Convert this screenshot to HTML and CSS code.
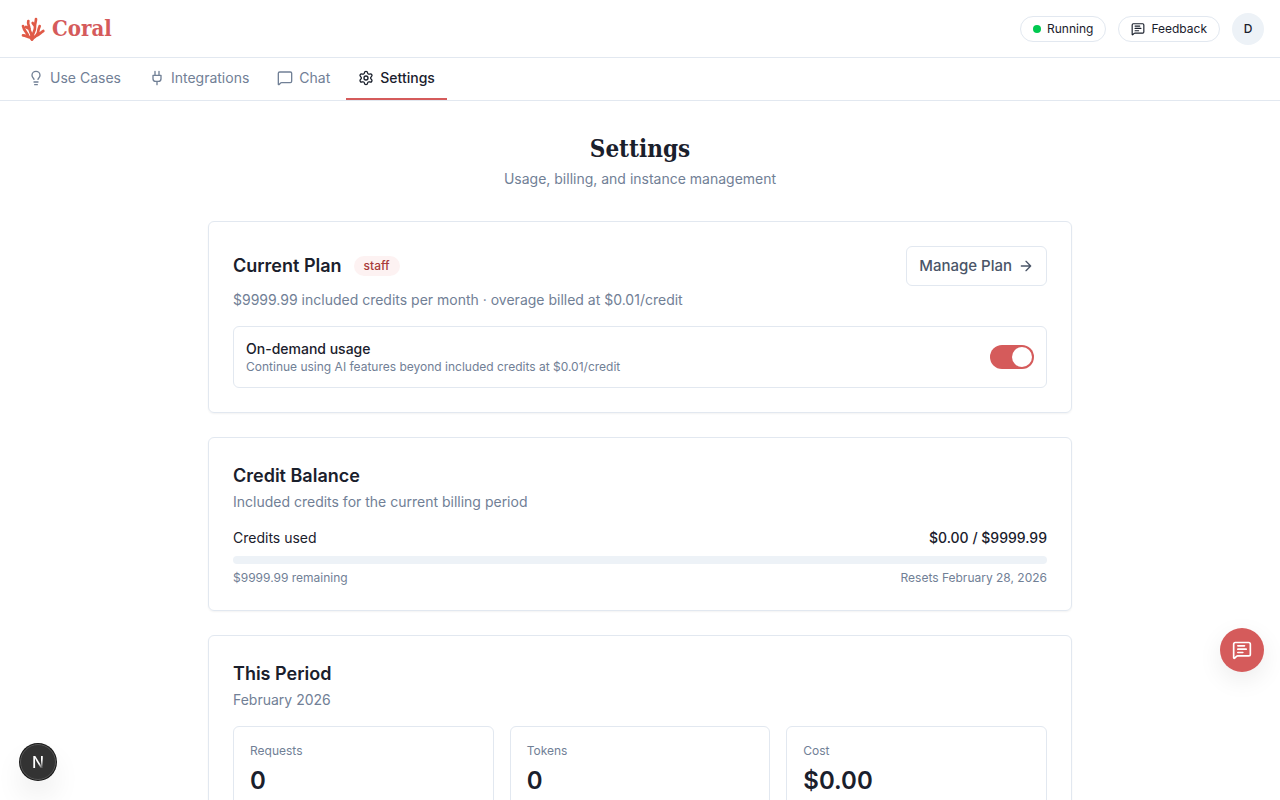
FILE: index.html
```html
<!DOCTYPE html>
<html lang="en">
<head>
    <meta charset="UTF-8">
    <meta name="viewport" content="width=device-width, initial-scale=1.0">
    <title>Coral - Settings</title>
    <link rel="stylesheet" href="styles.css">
</head>
<body>
    <header class="header">
        <a href="#" class="brand">
            <svg class="brand-icon" viewBox="0 0 96 96" aria-hidden="true">
                <path d="M47 72C38 75 32 68 21 67M37 71C35 58 24 56 21 39M47 72C48 60 40 56 40 46C40 38 34 34 37 24M41 48L30 42M49 72C50 60 58 54 57 42C56 32 60 28 60 18M57 40L50 30M50 75C62 70 66 62 67 54C67 48 70 44 71 39M62 68C70 66 74 58 82 54" />
                <path class="brand-base" d="M42 72L48 80L54 72Z" />
            </svg>
            <span class="brand-name">Coral</span>
        </a>
        <div class="header-actions">
            <button class="pill" type="button"><span class="dot"></span>Running</button>
            <button class="pill" type="button">
                <svg class="icon icon-sm" viewBox="0 0 24 24" aria-hidden="true">
                    <path d="M22 17a2 2 0 0 1-2 2H6.828a2 2 0 0 0-1.414.586l-2.202 2.202A.71.71 0 0 1 2 21.286V5a2 2 0 0 1 2-2h16a2 2 0 0 1 2 2z" />
                    <path d="M7 7h8M7 11h10M7 15h6" />
                </svg>
                Feedback
            </button>
            <button class="avatar" type="button">D</button>
        </div>
    </header>

    <nav class="tabs">
        <a href="#" class="tab">
            <svg class="icon" viewBox="0 0 24 24" aria-hidden="true">
                <path d="M15 14c.2-1 .7-1.700 1.500-2.500 1-.9 1.500-2.200 1.500-3.500A6 6 0 0 0 6 8c0 1 .2 2.200 1.500 3.500.7.700 1.300 1.500 1.500 2.500" />
                <path d="M9 18h6M10 22h4" />
            </svg>
            Use Cases
        </a>
        <a href="#" class="tab">
            <svg class="icon" viewBox="0 0 24 24" aria-hidden="true">
                <path d="M12 22v-5M9 8V2M15 8V2M18 8v5a4 4 0 0 1-4 4h-4a4 4 0 0 1-4-4V8Z" />
            </svg>
            Integrations
        </a>
        <a href="#" class="tab">
            <svg class="icon" viewBox="0 0 24 24" aria-hidden="true">
                <path d="M22 17a2 2 0 0 1-2 2H6.828a2 2 0 0 0-1.414.586l-2.202 2.202A.71.71 0 0 1 2 21.286V5a2 2 0 0 1 2-2h16a2 2 0 0 1 2 2z" />
            </svg>
            Chat
        </a>
        <a href="#" class="tab active" aria-current="page">
            <svg class="icon" viewBox="0 0 24 24" aria-hidden="true">
                <path d="M9.671 4.136a2.340 2.340 0 0 1 4.659 0 2.340 2.340 0 0 0 3.319 1.915 2.340 2.340 0 0 1 2.330 4.033 2.340 2.340 0 0 0 0 3.831 2.340 2.340 0 0 1-2.330 4.033 2.340 2.340 0 0 0-3.319 1.915 2.340 2.340 0 0 1-4.659 0 2.340 2.340 0 0 0-3.320-1.915 2.340 2.340 0 0 1-2.330-4.033 2.340 2.340 0 0 0 0-3.831A2.340 2.340 0 0 1 6.350 6.051a2.340 2.340 0 0 0 3.319-1.915" />
                <circle cx="12" cy="12" r="3" />
            </svg>
            Settings
        </a>
    </nav>

    <main class="page">
        <div class="page-title">
            <h1>Settings</h1>
            <p class="muted">Usage, billing, and instance management</p>
        </div>

        <section class="card">
            <div class="plan-header">
                <div class="plan-name">
                    <h2>Current Plan</h2>
                    <span class="badge">staff</span>
                </div>
                <button class="btn-outline" type="button">
                    Manage Plan
                    <svg class="icon" viewBox="0 0 24 24" aria-hidden="true">
                        <path d="M5 12h14M12 5l7 7-7 7" />
                    </svg>
                </button>
            </div>
            <p class="muted plan-info">$9999.99 included credits per month · overage billed at $0.01/credit</p>
            <div class="option">
                <div>
                    <label class="option-label" for="ondemand">On-demand usage</label>
                    <p class="small">Continue using AI features beyond included credits at $0.01/credit</p>
                </div>
                <input class="switch" type="checkbox" role="switch" id="ondemand" checked>
            </div>
        </section>

        <section class="card">
            <h2>Credit Balance</h2>
            <p class="muted subtitle">Included credits for the current billing period</p>
            <div class="row">
                <label for="credits">Credits used</label>
                <span class="amount">$0.00 / $9999.99</span>
            </div>
            <progress class="bar" id="credits" value="0" max="9999.99"></progress>
            <div class="row small">
                <span>$9999.99 remaining</span>
                <span>Resets February 28, 2026</span>
            </div>
        </section>

        <section class="card">
            <h2>This Period</h2>
            <p class="muted subtitle">February 2026</p>
            <div class="stats">
                <div class="stat">
                    <p class="small">Requests</p>
                    <p class="stat-value">0</p>
                </div>
                <div class="stat">
                    <p class="small">Tokens</p>
                    <p class="stat-value">0</p>
                </div>
                <div class="stat">
                    <p class="small">Cost</p>
                    <p class="stat-value">$0.00</p>
                </div>
            </div>
        </section>
    </main>

    <button class="fab" type="button" aria-label="Send feedback">
        <svg class="icon icon-lg" viewBox="0 0 24 24" aria-hidden="true">
            <path d="M22 17a2 2 0 0 1-2 2H6.828a2 2 0 0 0-1.414.586l-2.202 2.202A.71.71 0 0 1 2 21.286V5a2 2 0 0 1 2-2h16a2 2 0 0 1 2 2z" />
            <path d="M7 7h8M7 11h10M7 15h6" />
        </svg>
    </button>
    <button class="dev-badge" type="button" aria-label="Open dev tools"><span class="dev-letter">N</span></button>
</body>
</html>
```

FILE: styles.css
```css
* {
    box-sizing: border-box;
    margin: 0;
}

html {
    scrollbar-width: none;
}

body {
    font-family: 'Inter', sans-serif;
    font-size: 14px;
    line-height: 20px;
    color: #1a202c;
    background-color: #fff;
}

button {
    font-family: inherit;
    color: inherit;
    cursor: pointer;
}

a {
    text-decoration: none;
}

/* Icons */
.icon {
    width: 16px;
    height: 16px;
    flex-shrink: 0;
    fill: none;
    stroke: currentColor;
    stroke-width: 2;
    stroke-linecap: round;
    stroke-linejoin: round;
}

.icon-sm {
    width: 14px;
    height: 14px;
}

.icon-lg {
    width: 20px;
    height: 20px;
}

/* Header */
.header {
    display: flex;
    justify-content: space-between;
    align-items: center;
    padding: 12px 16px;
    border-bottom: 1px solid #e2e8f0;
}

.brand {
    display: flex;
    align-items: center;
    gap: 4px;
    color: #d55b5b;
}

.brand-icon {
    width: 32px;
    height: 32px;
    fill: none;
    stroke: #e05a47;
    stroke-width: 8;
    stroke-linecap: round;
    stroke-linejoin: round;
}

.brand-base {
    fill: #e05a47;
}

.brand-name {
    font-family: 'DejaVu Serif Condensed', 'DejaVu Serif', serif;
    font-size: 22px;
    font-weight: 700;
    line-height: 33px;
}

.header-actions {
    display: flex;
    align-items: center;
    gap: 12px;
}

.pill {
    display: flex;
    align-items: center;
    gap: 6px;
    padding: 4px 12px;
    border: 1px solid #e2e8f0;
    border-radius: 20px;
    background-color: #fff;
    font-size: 12px;
    line-height: 16px;
}

.dot {
    width: 8px;
    height: 8px;
    border-radius: 50%;
    background-color: #00c950;
}

.avatar {
    width: 32px;
    height: 32px;
    padding: 0;
    border: none;
    border-radius: 50%;
    background-color: #edf2f7;
    font-size: 12px;
    font-weight: 500;
}

/* Tabs */
.tabs {
    display: flex;
    gap: 4px;
    padding: 0 16px;
    border-bottom: 1px solid #e2e8f0;
}

.tab {
    display: flex;
    align-items: center;
    gap: 6px;
    padding: 10px 12px;
    border-bottom: 2px solid transparent;
    color: #718096;
}

.tab.active {
    border-bottom-color: #d55b5b;
    color: #1a202c;
    font-weight: 500;
}

/* Page */
.page {
    display: flex;
    flex-direction: column;
    gap: 24px;
    max-width: 896px;
    margin: 0 auto;
    padding: 32px 16px;
}

.page-title {
    margin-bottom: 8px;
    text-align: center;
}

h1 {
    margin-bottom: 4px;
    font-family: 'DejaVu Serif Condensed', 'DejaVu Serif', serif;
    font-size: 24px;
    font-weight: 700;
    line-height: 32px;
}

h2 {
    font-size: 18px;
    font-weight: 600;
    line-height: 28px;
}

.muted {
    color: #718096;
}

.small {
    font-size: 12px;
    line-height: 16px;
    color: #718096;
}

.card {
    padding: 24px;
    border: 1px solid #e2e8f0;
    border-radius: 6px;
    box-shadow: 0 1px 2px rgba(0, 0, 0, 0.05);
}

.subtitle {
    margin-top: 2px;
    margin-bottom: 16px;
}

/* Current plan */
.plan-header,
.plan-name {
    display: flex;
    align-items: center;
    gap: 12px;
}

.plan-header {
    justify-content: space-between;
}

.badge {
    padding: 2px 10px;
    border-radius: 10px;
    background-color: #fdf2f2;
    color: #a83a3a;
    font-size: 12px;
    font-weight: 500;
    line-height: 16px;
}

.btn-outline {
    display: flex;
    align-items: center;
    gap: 6px;
    padding: 8px 12px;
    border: 1px solid #e2e8f0;
    border-radius: 6px;
    background-color: #fff;
    color: #4a5568;
    font-size: 15px;
    font-weight: 500;
    line-height: 22px;
}

.plan-info {
    margin-top: 4px;
    margin-bottom: 16px;
}

.option {
    display: flex;
    justify-content: space-between;
    align-items: center;
    gap: 16px;
    padding: 12px;
    border: 1px solid #e2e8f0;
    border-radius: 6px;
}

.option-label {
    display: block;
    font-weight: 500;
}

.switch {
    display: flex;
    justify-content: flex-end;
    flex-shrink: 0;
    width: 44px;
    height: 24px;
    padding: 2px;
    -webkit-appearance: none;
    appearance: none;
    border-radius: 12px;
    background-color: #cbd5e0;
    cursor: pointer;
}

.switch::before {
    content: '';
    width: 20px;
    height: 20px;
    border-radius: 50%;
    background-color: #fff;
}

.switch:checked {
    background-color: #d55b5b;
}

.switch:not(:checked) {
    justify-content: flex-start;
}

/* Credit balance */
.row {
    display: flex;
    justify-content: space-between;
}

.amount {
    font-weight: 500;
}

.bar {
    display: block;
    width: 100%;
    height: 8px;
    margin-top: 8px;
    margin-bottom: 6px;
    -webkit-appearance: none;
    appearance: none;
    border: none;
    border-radius: 4px;
    overflow: hidden;
}

.bar::-webkit-progress-bar {
    background-color: #edf2f7;
}

.bar::-webkit-progress-value {
    background-color: #d55b5b;
}

/* This period */
.stats {
    display: grid;
    grid-template-columns: repeat(3, 1fr);
    gap: 16px;
}

.stat {
    padding: 16px;
    border: 1px solid #e2e8f0;
    border-radius: 6px;
}

.stat-value {
    margin-top: 6px;
    font-size: 24px;
    font-weight: 600;
    line-height: 32px;
}

/* Floating buttons */
.fab {
    position: fixed;
    right: 16px;
    bottom: 128px;
    display: flex;
    justify-content: center;
    align-items: center;
    width: 44px;
    height: 44px;
    border: none;
    border-radius: 50%;
    background-color: #d55b5b;
    color: #fff;
    box-shadow: 0 8px 24px rgba(0, 0, 0, 0.08);
}

.dev-badge {
    position: fixed;
    left: 20px;
    bottom: 20px;
    width: 36px;
    height: 36px;
    padding: 0;
    border: 1px solid #555;
    border-radius: 50%;
    background-color: #333;
    box-shadow: 0 0 0 1px #171717, 0 16px 32px -8px rgba(0, 0, 0, 0.24);
}

.dev-letter {
    background: linear-gradient(120deg, #fff 60%, #555 80%);
    -webkit-background-clip: text;
    background-clip: text;
    color: transparent;
    font-size: 16px;
    font-weight: 500;
}

@media (max-width: 640px) {
    .tabs {
        overflow-x: auto;
    }

    .stats {
        grid-template-columns: 1fr;
    }
}
```
